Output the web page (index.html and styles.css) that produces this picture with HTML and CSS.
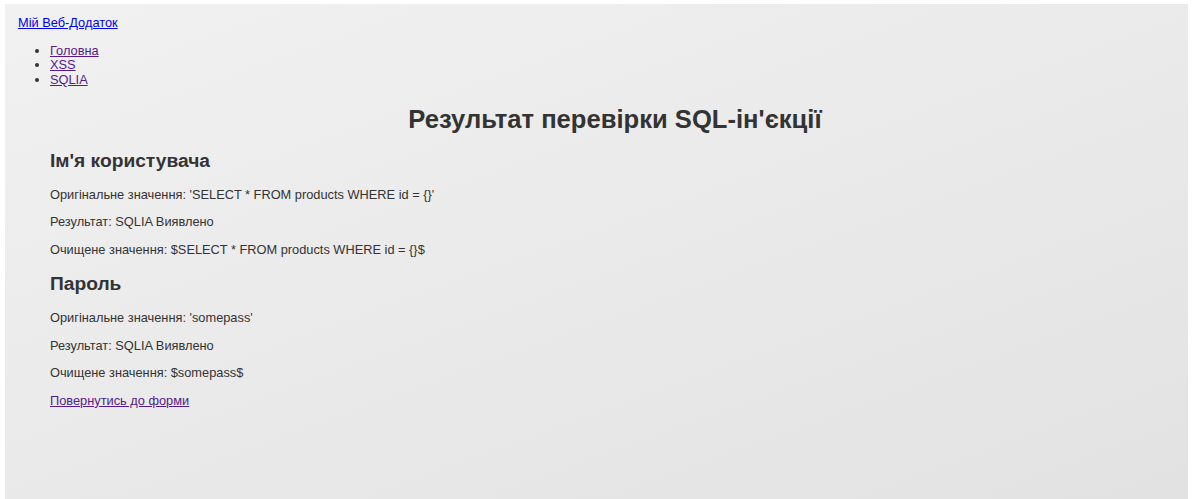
FILE: index.html
```html
<!DOCTYPE html>
<html lang="uk">
<head>
<meta charset="utf-8">
<title>Результат перевірки SQL-ін'єкції</title>
<link rel="stylesheet" href="styles.css">
</head>
<body>
<div class="page">
  <header class="site-header">
    <a class="brand" href="#">Мій Веб-Додаток</a>
    <ul class="nav">
      <li><a class="visited" href="#">Головна</a></li>
      <li><a class="visited" href="#">XSS</a></li>
      <li><a class="visited" href="#">SQLIA</a></li>
    </ul>
  </header>
  <main class="content">
    <h1 class="title">Результат перевірки SQL-ін'єкції</h1>
    <section class="field">
      <h2 class="field-name">Ім'я користувача</h2>
      <p class="line">Оригінальне значення: 'SELECT * FROM products WHERE id = {}'</p>
      <p class="line">Результат: SQLIA Виявлено</p>
      <p class="line">Очищене значення: $SELECT * FROM products WHERE id = {}$</p>
    </section>
    <section class="field">
      <h2 class="field-name">Пароль</h2>
      <p class="line">Оригінальне значення: 'somepass'</p>
      <p class="line">Результат: SQLIA Виявлено</p>
      <p class="line">Очищене значення: $somepass$</p>
    </section>
    <p class="line"><a class="visited" href="#">Повернутись до форми</a></p>
  </main>
</div>
</body>
</html>
```

FILE: styles.css
```css
html, body {
  margin: 0;
  padding: 0;
  background: #ffffff;
}

body {
  font-family: "Liberation Sans", Arial, sans-serif;
  font-size: 12.8px;
  line-height: 1.15;
  color: #333333;
}

.page {
  margin: 4px 4px 0 5px;
  min-height: 495px;
  background: linear-gradient(160deg, #f1f1f1 0%, #e9e9e9 55%, #e2e2e2 100%);
  padding-top: 12px;
  box-sizing: border-box;
}

.site-header {
  padding-left: 13px;
}

.brand {
  color: #0000ee;
}

.nav {
  margin: 12.8px 0;
  padding-left: 32px;
  color: #333333;
}

.visited {
  color: #551a8b;
}

.content {
  margin: 0 8px 0 45px;
}

.title {
  font-size: 25.6px;
  font-weight: bold;
  text-align: center;
  margin: 17px 0 15px;
}

.field-name {
  font-size: 19.2px;
  font-weight: bold;
  margin: 15.9px 0;
}

.line {
  margin: 12.8px 0;
}
```
